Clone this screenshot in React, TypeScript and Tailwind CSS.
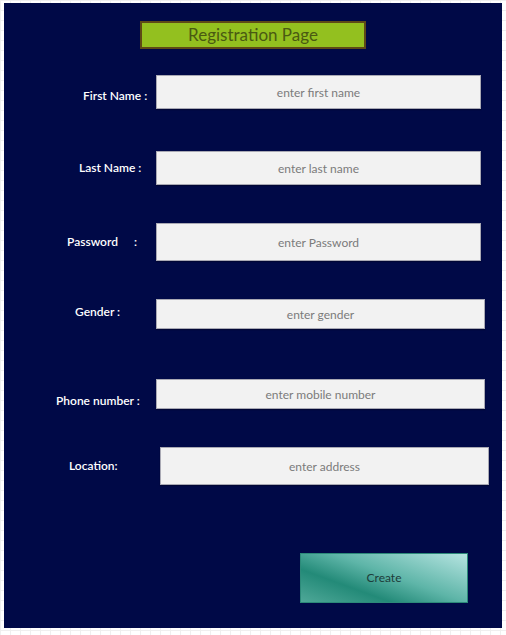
const rows = [
  { label: "First Name :", placeholder: "enter first name", mt: "mt-[26px]", pl: "pl-[79px]", lt: "pt-[8px]", ml: "ml-0", w: "w-[325px]", h: "h-[34px]" },
  { label: "Last Name :", placeholder: "enter last name", mt: "mt-[42px]", pl: "pl-[75px]", lt: "pt-0", ml: "ml-0", w: "w-[325px]", h: "h-[34px]" },
  { label: "Password", placeholder: "enter Password", mt: "mt-[38px]", pl: "pl-[63px]", lt: "pt-0", ml: "ml-0", w: "w-[325px]", h: "h-[38px]", colon: true },
  { label: "Gender :", placeholder: "enter gender", mt: "mt-[38px]", pl: "pl-[71px]", lt: "pb-[4px]", ml: "ml-0", w: "w-[329px]", h: "h-[30px]" },
  { label: "Phone number :", placeholder: "enter mobile number", mt: "mt-[50px]", pl: "pl-[52px]", lt: "pt-[14px]", ml: "ml-0", w: "w-[329px]", h: "h-[30px]" },
  { label: "Location:", placeholder: "enter address", mt: "mt-[38px]", pl: "pl-[65px]", lt: "pt-0", ml: "ml-[4px]", w: "w-[329px]", h: "h-[38px]" },
];

export default function App() {
  return (
    <div
      className="w-[506px] h-[635px] pt-[3px] pl-[4px] bg-white bg-[linear-gradient(#efefef_1px,transparent_1px),linear-gradient(90deg,#efefef_1px,transparent_1px)] bg-[size:10px_10px]"
      style={{ fontFamily: "Lato, 'Open Sans', sans-serif" }}
    >
      <div className="w-[498px] h-[625px] bg-[#000947] flex flex-col pt-[18px]">
        <div className="ml-[136px] w-[226px] h-[28px] bg-[#93c01f] border-2 border-[#5e4a16] flex items-center justify-center text-[17px] text-[#4a5a12]">
          Registration Page
        </div>

        {rows.map((r) => (
          <div key={r.label} className={`flex items-center ${r.mt}`}>
            <div className={`w-[152px] shrink-0 ${r.pl} ${r.lt} text-[12px] leading-[12px] font-semibold text-white whitespace-pre`}>
              {r.colon ? (
                <span>
                  Password<span className="ml-[16px]">:</span>
                </span>
              ) : (
                r.label
              )}
            </div>
            <input
              readOnly
              placeholder={r.placeholder}
              className={`${r.ml} ${r.w} ${r.h} bg-[#f2f2f2] border border-[#a9a9b4] shadow-[0_1px_1px_rgba(0,0,0,0.25)] text-center text-[12px] outline-none placeholder:text-[#7b7b7b]`}
            />
          </div>
        ))}

        <button className="mt-[68px] ml-[296px] w-[168px] h-[50px] border border-[#2c8a79] bg-[linear-gradient(200deg,#b6e4e1_0%,#5eb5a8_45%,#238a78_70%,#4fa898_100%)] text-[12px] text-[#1d3d3a]">
          Create
        </button>
      </div>
    </div>
  );
}
